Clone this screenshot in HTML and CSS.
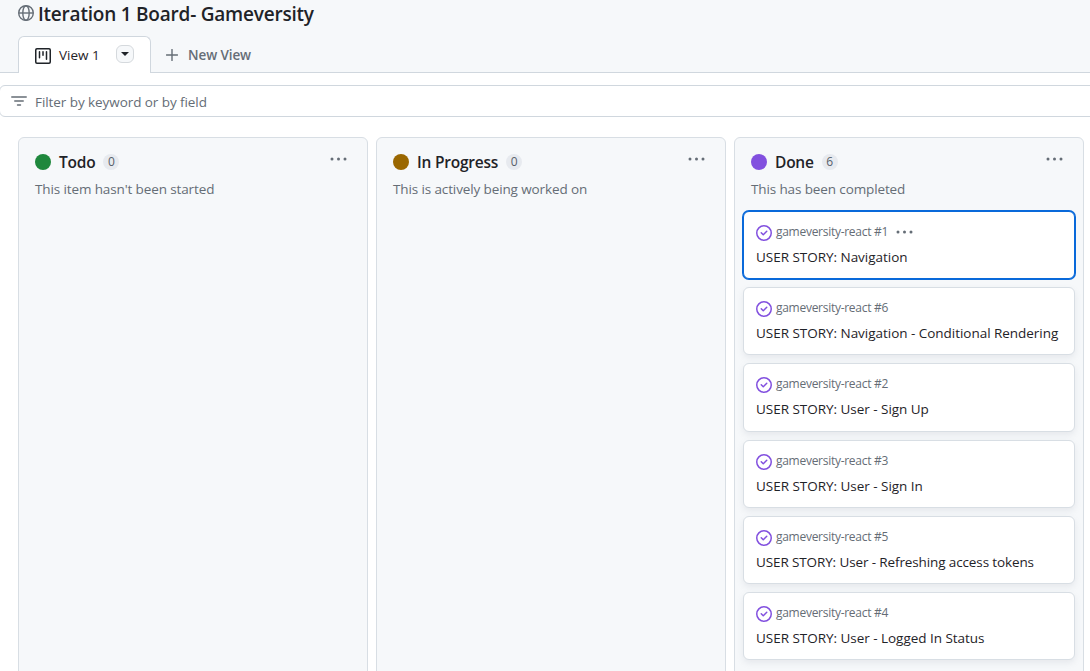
FILE: index.html
```html
<!DOCTYPE html>
<html lang="en">
<head>
<meta charset="utf-8">
<title>Iteration 1 Board- Gameversity</title>
<link rel="stylesheet" href="styles.css">
</head>
<body>
<svg class="defs" aria-hidden="true">
  <symbol id="done" viewBox="0 0 16 16"><path d="M11.28 6.78a.75.75 0 0 0-1.06-1.06L7.25 8.69 5.78 7.22a.75.75 0 0 0-1.06 1.06l2 2a.75.75 0 0 0 1.06 0l3.5-3.5Z"/><path d="M16 8A8 8 0 1 1 0 8a8 8 0 0 1 16 0Zm-1.5 0a6.5 6.5 0 1 0-13 0 6.5 6.5 0 0 0 13 0Z"/></symbol>
  <symbol id="dots" viewBox="0 0 18 4"><circle cx="2" cy="2" r="1.5"/><circle cx="8.5" cy="2" r="1.5"/><circle cx="15" cy="2" r="1.5"/></symbol>
</svg>
<header class="header">
  <div class="title-row">
    <svg class="globe" viewBox="0 0 16 16"><g fill="none" stroke="currentColor" stroke-width="1.4"><circle cx="8" cy="8" r="7.3"/><ellipse cx="8" cy="8" rx="3.2" ry="7.3"/><path d="M1 8h14"/></g></svg>
    <h1 class="title">Iteration 1 Board- Gameversity</h1>
  </div>
  <nav class="tabs">
    <div class="tab">
      <svg class="icon" viewBox="0 0 16 16"><g fill="none" stroke="currentColor" stroke-width="1.5"><rect x=".75" y=".75" width="14.5" height="14.5" rx="1.2"/><path d="M4.5 3.7v6M8 3.7v3.6M11.5 3.7v7.6" stroke-linecap="round"/></g></svg>
      <span class="tab-label">View 1</span>
      <button class="tab-menu" aria-label="View options"><svg width="8" height="4" viewBox="0 0 8 4"><path d="M0 0h8L4 4Z"/></svg></button>
    </div>
    <div class="new-view">
      <svg width="12" height="12" viewBox="0 0 12 12"><path d="M6 .5v11M.5 6h11" stroke="currentColor" stroke-width="1.4" stroke-linecap="round"/></svg>
      <span class="new-label">New View</span>
    </div>
  </nav>
</header>
<div class="filter">
  <svg width="16" height="10" viewBox="0 0 16 10"><path d="M.75 1h14.5M3.75 5h8.5M6.5 9h3" stroke="currentColor" stroke-width="1.4" stroke-linecap="round"/></svg>
  <span class="filter-label">Filter by keyword or by field</span>
</div>
<main class="board">
  <section class="column">
    <div class="column-head"><i class="dot green"></i><h2 class="column-name">Todo</h2><span class="count">0</span><svg class="dots"><use href="#dots"/></svg></div>
    <p class="description">This item hasn't been started</p>
  </section>
  <section class="column">
    <div class="column-head"><i class="dot amber"></i><h2 class="column-name">In Progress</h2><span class="count">0</span><svg class="dots"><use href="#dots"/></svg></div>
    <p class="description">This is actively being worked on</p>
  </section>
  <section class="column">
    <div class="column-head"><i class="dot purple"></i><h2 class="column-name">Done</h2><span class="count">6</span><svg class="dots"><use href="#dots"/></svg></div>
    <p class="description">This has been completed</p>
    <div class="cards">
      <article class="card selected"><div class="meta"><svg class="check"><use href="#done"/></svg><span class="repo">gameversity-react #1</span><svg class="dots"><use href="#dots"/></svg></div><p class="story">USER STORY: Navigation</p></article>
      <article class="card"><div class="meta"><svg class="check"><use href="#done"/></svg><span class="repo">gameversity-react #6</span></div><p class="story">USER STORY: Navigation - Conditional Rendering</p></article>
      <article class="card"><div class="meta"><svg class="check"><use href="#done"/></svg><span class="repo">gameversity-react #2</span></div><p class="story">USER STORY: User - Sign Up</p></article>
      <article class="card"><div class="meta"><svg class="check"><use href="#done"/></svg><span class="repo">gameversity-react #3</span></div><p class="story">USER STORY: User - Sign In</p></article>
      <article class="card"><div class="meta"><svg class="check"><use href="#done"/></svg><span class="repo">gameversity-react #5</span></div><p class="story long">USER STORY: User - Refreshing access tokens</p></article>
      <article class="card"><div class="meta"><svg class="check"><use href="#done"/></svg><span class="repo">gameversity-react #4</span></div><p class="story">USER STORY: User - Logged In Status</p></article>
    </div>
  </section>
</main>
</body>
</html>
```
FILE: styles.css
```css
* { box-sizing: border-box; }
body {
  margin: 0;
  height: 671px;
  overflow: hidden;
  display: flex;
  flex-direction: column;
  background: #fff;
  color: #1f2328;
  font: 13.5px/20px "Open Sans", "Noto Sans", sans-serif;
  white-space: nowrap;
}
h1, h2, p { margin: 0; }
svg { flex: none; display: block; fill: currentColor; }
.defs { display: none; }
.header {
  height: 73px;
  flex: none;
  display: flex;
  flex-direction: column;
  justify-content: space-between;
  background: #f6f8fa;
  box-shadow: inset 0 -1px #d0d7de;
  padding-left: 18px;
}
.title-row { display: flex; align-items: center; height: 28px; gap: 4px; }
.globe { width: 16px; height: 16px; color: #656d76; margin-bottom: 2px; }
.title { font-size: 19px; line-height: 28px; font-weight: 600; letter-spacing: -0.22px; }
.tabs { display: flex; height: 37px; }
.tab {
  width: 133px;
  display: flex;
  align-items: center;
  padding: 0 16px;
  background: #fff;
  border: 1px solid #d0d7de;
  border-bottom: 0;
  border-radius: 6px 6px 0 0;
}
.icon { width: 16px; height: 16px; margin-top: 2px; }
.tab-label { margin-left: 8px; }
.tab-menu {
  width: 18px;
  height: 18px;
  margin: 0 0 2px auto;
  padding: 0;
  display: grid;
  place-items: center;
  background: #f6f8fa;
  border: 1px solid #d5d9dd;
  border-radius: 6px;
  color: #1f2328;
}
.new-view { display: flex; align-items: center; gap: 10px; margin-left: 15px; color: #656d76; padding-top: 1px; }
.new-label { font-weight: 600; letter-spacing: -0.1px; }
.filter {
  display: flex;
  align-items: center;
  flex: none;
  height: 32px;
  margin: 12px -8px 0 -1px;
  padding-left: 11px;
  gap: 8px;
  border: 1px solid #d0d7de;
  border-radius: 6px;
  color: #656d76;
}
.filter-label { padding-top: 2px; letter-spacing: -0.07px; }
.board { display: flex; gap: 8px; flex: none; height: 560px; margin: 20px 0 0 18px; }
.column {
  width: 350px;
  flex: none;
  background: #f6f8fa;
  border: 1px solid #d8dee4;
  border-radius: 6px;
  padding-top: 12px;
}
.column-head { display: flex; align-items: center; height: 24px; padding: 0 19px 0 16px; }
.dot { width: 16px; height: 16px; border-radius: 50%; }
.green { background: #1f883d; }
.amber { background: #9a6700; }
.purple { background: #8250df; }
.column-name { margin-left: 8px; font-size: 15.5px; line-height: 24px; font-weight: 600; letter-spacing: -0.23px; }
.count {
  min-width: 16px;
  height: 16px;
  margin-left: 8px;
  border-radius: 8px;
  text-align: center;
  font-size: 12px;
  line-height: 16px;
  color: #57606a;
  background: #e7eaef;
}
.dots { width: 18px; height: 4px; color: #656d76; }
.column-head .dots { margin: 0 0 6px auto; }
.description { margin: 5px 0 0 16px; color: #656d76; letter-spacing: -0.12px; }
.cards { display: flex; flex-direction: column; gap: 8px; padding: 12px 8px 0; }
.card {
  height: 68.2px;
  flex: none;
  padding: 11px 12px 0;
  background: #fff;
  border: 1px solid #d8dee4;
  border-radius: 6px;
  box-shadow: 0 3px 6px rgba(140, 149, 159, .15);
}
.selected { border-color: #0969da; box-shadow: 0 0 0 1px #0969da; }
.meta { display: flex; align-items: center; height: 18px; color: #656d76; }
.check { width: 16px; height: 16px; color: #8250df; margin-top: 2px; }
.repo { margin-left: 4px; font-size: 12px; line-height: 18px; letter-spacing: -0.28px; }
.meta .dots { margin-left: 8px; }
.story { margin-top: 6px; letter-spacing: -0.03px; }
.long { letter-spacing: -0.12px; }
```
